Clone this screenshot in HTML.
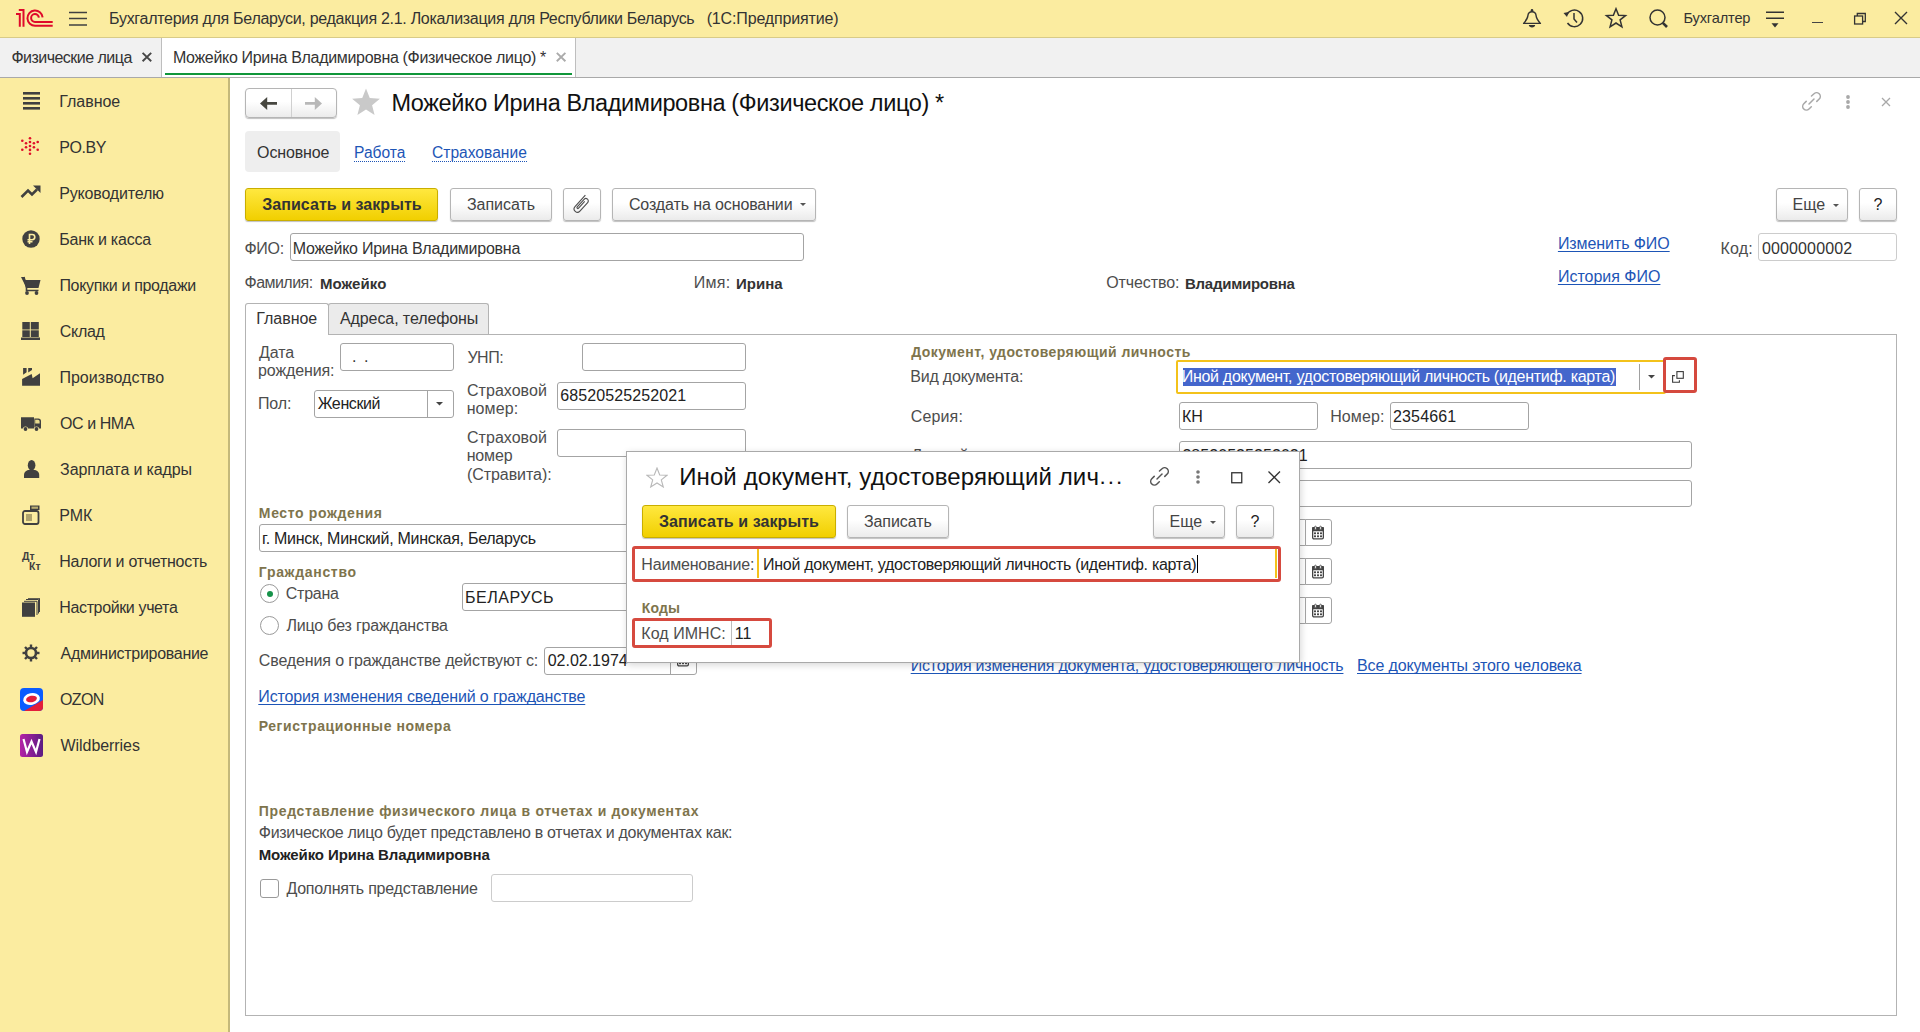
<!DOCTYPE html>
<html><head><meta charset="utf-8">
<style>
*{box-sizing:border-box;margin:0;padding:0}
html,body{width:1920px;height:1032px;overflow:hidden;background:#fff;font-family:"Liberation Sans",sans-serif;color:#333}
div,span,svg{position:absolute;white-space:nowrap}
.t{line-height:1}
.btn{border:1px solid #B5B5B5;border-radius:3px;background:linear-gradient(#fff 45%,#EBEBEB);box-shadow:0 1px 1px rgba(0,0,0,.25)}
.ybtn{border:1px solid #C9AE00;border-radius:3px;background:linear-gradient(#FFE83F,#F1CF00);box-shadow:0 1px 1px rgba(0,0,0,.25)}
.inp{border:1px solid #A4A4A4;border-radius:3px;background:#fff}
.inpl{border:1px solid #CCCCCC;border-radius:3px;background:#fff}
</style></head><body>

<div style="left:0;top:0;width:1920px;height:38px;background:#FBECA0;border-bottom:1px solid #D8CB88"></div>
<svg style="left:10px;top:4px" width="50" height="28" viewBox="10 4 50 28"><g fill="none" stroke="#DF0A2B" stroke-width="2" stroke-linecap="butt">
<path d="M16 14.1 H19.8 V26.8"/>
<path d="M18.8 10.1 H23.5 V26.8"/>
<path d="M42.6 17.3 A7.6 7.6 0 1 0 35.2 25.7 H52.7"/>
<path d="M38.9 17.6 A3.9 3.9 0 1 0 35 21.9 H52.7"/>
</g></svg>
<svg style="left:68px;top:11px" width="20" height="16" viewBox="0 0 20 16"><g stroke="#404040" stroke-width="1.5"><path d="M1 1.5H19M1 7.5H19M1 13.9H19"/></g></svg>
<span class="t" style="left:109.10px;top:10.86px;font-size:16px;color:#333;letter-spacing:-0.290px">Бухгалтерия для Беларуси, редакция 2.1. Локализация для Республики Беларусь</span>
<span class="t" style="left:706.70px;top:10.86px;font-size:16px;color:#333;letter-spacing:-0.156px">(1С:Предприятие)</span>
<svg style="left:1515px;top:4px" width="32" height="28" viewBox="1515 4 32 28"><path d="M1523.6 23.4 C1526.2 20.4 1527.7 18.6 1527.9 15.6 C1528.2 12.6 1530 11.7 1532 11.7 C1534 11.7 1535.8 12.6 1536.1 15.6 C1536.3 18.6 1537.8 20.4 1540.4 23.4 Z" fill="none" stroke="#333" stroke-width="1.4" stroke-linejoin="round"/><circle cx="1532" cy="10.4" r="1.3" fill="#333"/><path d="M1528.8 25 H1535.2 C1535.2 28.2 1528.8 28.2 1528.8 25 Z" fill="#333"/></svg>
<svg style="left:1562px;top:7px" width="24" height="23" viewBox="0 0 24 23"><g fill="none" stroke="#333" stroke-width="1.5">
<path d="M4.8 8 A8.3 8.3 0 1 1 5.5 16"/><path d="M12 6 V12 L15 15.5"/></g><path d="M1.5 6 L6.5 5 L5 10 Z" fill="#333"/></svg>
<svg style="left:1604px;top:7px" width="24" height="22" viewBox="0 0 24 22"><path d="M12 1.8 L14.6 8.3 L21.5 8.6 L16.1 12.9 L17.9 19.8 L12 16 L6.1 19.8 L7.9 12.9 L2.5 8.6 L9.4 8.3 Z" fill="none" stroke="#333" stroke-width="1.5" stroke-linejoin="miter"/></svg>
<svg style="left:1647px;top:7px" width="24" height="23" viewBox="0 0 24 23"><g fill="none" stroke="#333"><circle cx="10.5" cy="10.5" r="7.5" stroke-width="1.5"/><path d="M15.8 15.8 L20 20" stroke-width="2.6"/></g></svg>
<span class="t" style="left:1683.40px;top:11.04px;font-size:14.6px;color:#333;letter-spacing:-0.143px">Бухгалтер</span>
<svg style="left:1764px;top:10px" width="22" height="20" viewBox="0 0 22 20"><g stroke="#333" stroke-width="1.5"><path d="M2 2.2H20M2 8.2H20"/></g><path d="M7.5 13.2 H14.5 L11 17.5 Z" fill="#333"/></svg>
<div style="left:1812px;top:22px;width:11px;height:1px;background:#444"></div>
<svg style="left:1852px;top:11px" width="16" height="15" viewBox="0 0 16 15"><g fill="none" stroke="#333" stroke-width="1.3"><rect x="2.6" y="5" width="8" height="8"/><path d="M5.3 5 V2.5 H13.3 V10.5 H10.6"/></g></svg>
<svg style="left:1893px;top:10px" width="16" height="16" viewBox="0 0 16 16"><path d="M2 2 L14 14 M14 2 L2 14" stroke="#333" stroke-width="1.4"/></svg>
<div style="left:0;top:38px;width:1920px;height:40px;background:#F1F1F1;border-bottom:1px solid #A9A9A9"></div>
<span class="t" style="left:11.40px;top:49.86px;font-size:16px;color:#333;letter-spacing:-0.523px">Физические лица</span>
<svg style="left:140px;top:50px" width="14" height="14" viewBox="140 50 14 14"><path d="M142.6 52.9 L151.2 61.3 M151.2 52.9 L142.6 61.3" stroke="#474747" stroke-width="1.9"/></svg>
<div style="left:161px;top:38px;width:415px;height:39px;background:#fff;border-left:1px solid #BEBEBE;border-right:1px solid #BEBEBE"></div>
<div style="left:165px;top:73px;width:407px;height:2px;background:#10963A"></div>
<span class="t" style="left:172.90px;top:49.86px;font-size:16px;color:#333;letter-spacing:-0.322px">Можейко Ирина Владимировна (Физическое лицо) *</span>
<svg style="left:554px;top:50px" width="14" height="14" viewBox="554 50 14 14"><path d="M556.8 52.9 L565.4 61.3 M565.4 52.9 L556.8 61.3" stroke="#ABABAB" stroke-width="1.9"/></svg>
<div style="left:0;top:78px;width:230px;height:954px;background:#FBECA0;border-right:2px solid #C4B97A"></div>
<span class="t" style="left:59.30px;top:93.86px;font-size:16px;color:#333;letter-spacing:-0.039px">Главное</span>
<span class="t" style="left:59.30px;top:139.86px;font-size:16px;color:#333;letter-spacing:-0.434px">PO.BY</span>
<span class="t" style="left:59.30px;top:185.86px;font-size:16px;color:#333;letter-spacing:-0.177px">Руководителю</span>
<span class="t" style="left:59.30px;top:231.86px;font-size:16px;color:#333;letter-spacing:-0.219px">Банк и касса</span>
<span class="t" style="left:59.40px;top:277.86px;font-size:16px;color:#333;letter-spacing:-0.322px">Покупки и продажи</span>
<span class="t" style="left:59.80px;top:323.86px;font-size:16px;color:#333;letter-spacing:-0.317px">Склад</span>
<span class="t" style="left:59.40px;top:369.86px;font-size:16px;color:#333;letter-spacing:0.034px">Производство</span>
<span class="t" style="left:59.90px;top:415.86px;font-size:16px;color:#333;letter-spacing:-0.402px">ОС и НМА</span>
<span class="t" style="left:60.10px;top:461.86px;font-size:16px;color:#333;letter-spacing:-0.124px">Зарплата и кадры</span>
<span class="t" style="left:59.30px;top:507.86px;font-size:16px;color:#333">РМК</span>
<span class="t" style="left:59.30px;top:553.86px;font-size:16px;color:#333;letter-spacing:-0.263px">Налоги и отчетность</span>
<span class="t" style="left:59.30px;top:599.86px;font-size:16px;color:#333;letter-spacing:-0.368px">Настройки учета</span>
<span class="t" style="left:60.60px;top:645.86px;font-size:16px;color:#333;letter-spacing:-0.292px">Администрирование</span>
<span class="t" style="left:59.90px;top:691.86px;font-size:16px;color:#333;letter-spacing:-0.588px">OZON</span>
<span class="t" style="left:60.60px;top:737.86px;font-size:16px;color:#333;letter-spacing:-0.072px">Wildberries</span>
<svg style="left:23px;top:92px" width="17" height="18" viewBox="0 0 17 18"><g fill="#404040"><rect x="0" y="0" width="17" height="2.6"/><rect x="0" y="5" width="17" height="2.6"/><rect x="0" y="10" width="17" height="2.6"/><rect x="0" y="15" width="17" height="2.6"/></g></svg>
<svg style="left:15px;top:132px" width="32" height="30" viewBox="15 132 32 30"><circle cx="30" cy="138.25" r="1.3" fill="#E0102A"/><circle cx="30" cy="142" r="1.3" fill="#E0102A"/><circle cx="30" cy="146" r="1.3" fill="#E0102A"/><circle cx="30" cy="149.9" r="1.3" fill="#E0102A"/><circle cx="30" cy="153.7" r="1.3" fill="#E0102A"/><circle cx="26.05" cy="143.3" r="1.3" fill="#E0102A"/><circle cx="26.05" cy="147.3" r="1.3" fill="#E0102A"/><circle cx="33.9" cy="143.3" r="1.3" fill="#E0102A"/><circle cx="33.9" cy="147.3" r="1.3" fill="#E0102A"/><circle cx="22.3" cy="140.7" r="1.3" fill="#E0102A"/><circle cx="22.3" cy="149.7" r="1.3" fill="#E0102A"/><circle cx="37.7" cy="142" r="1.3" fill="#E0102A"/><circle cx="37.7" cy="149.7" r="1.3" fill="#E0102A"/></svg>
<svg style="left:20px;top:185px" width="21" height="14" viewBox="0 0 21 14"><path d="M1.5 12 L8 5.5 L12 9.5 L17 4.5" fill="none" stroke="#404040" stroke-width="2.6"/><path d="M13 0.5 H20.5 V8 Z" fill="#404040"/></svg>
<svg style="left:22px;top:230px" width="18" height="18" viewBox="0 0 18 18"><circle cx="9" cy="9" r="8.7" fill="#404040"/><g fill="none" stroke="#FBECA0" stroke-width="1.6"><path d="M7.5 14 V4.5 H10.2 A2.6 2.6 0 0 1 10.2 9.7 H5.5 M5.5 11.8 H10.5"/></g></svg>
<svg style="left:21px;top:276px" width="20" height="19" viewBox="0 0 20 19"><path d="M0 1 H3 L4.5 4 H19.5 L17.5 12 H5.5 Z" fill="#404040"/><path d="M3 1 L5.5 12 V14.5 H17.5" fill="none" stroke="#404040" stroke-width="1.6"/><circle cx="6" cy="17" r="1.9" fill="#404040"/><circle cx="15.5" cy="17" r="1.9" fill="#404040"/></svg>
<svg style="left:21px;top:322px" width="19" height="18" viewBox="0 0 19 18"><g fill="#404040"><rect x="1.3" y="0" width="7.5" height="7.5"/><rect x="9.8" y="0" width="8" height="7.5"/><rect x="1.3" y="8.3" width="7.5" height="6.7"/><rect x="9.8" y="8.3" width="8" height="6.7"/><rect x="0" y="15.5" width="19" height="2.5"/></g></svg>
<svg style="left:15px;top:360px" width="32" height="80" viewBox="15 360 32 80"><path d="M22.1 379 L31.7 373.9 L32.6 378.2 L40 373.2 V385.8 H22.1 Z" fill="#404040"/><path d="M23.1 368.1 H26.6 V372.2 L23.1 374.8 Z M28.2 368.1 H32 V370 L28.2 372.6 Z" fill="#404040"/><path d="M21 417.2 H34 V428.5 H21 Z M34.3 418.6 H38.3 A2.7 2.7 0 0 1 41 421.3 V428.5 H34.3 Z" fill="#404040"/><path d="M35.2 419.7 H38 A1.6 1.6 0 0 1 39.6 421.3 V423.6 H35.2 Z" fill="#E9DC8E"/><circle cx="25.5" cy="429" r="2.6" fill="#FBECA0"/><circle cx="36.5" cy="429" r="2.6" fill="#FBECA0"/><circle cx="25.5" cy="429" r="1.9" fill="#404040"/><circle cx="36.5" cy="429" r="1.9" fill="#404040"/></svg>
<svg style="left:24px;top:460px" width="16" height="18" viewBox="0 0 16 18"><ellipse cx="7.6" cy="5.2" rx="3.8" ry="5.2" fill="#404040"/><path d="M0 18 V15 C0 11.5 3 10 5 10 H10 C12.5 10 15.2 11.5 15.2 15 V18 Z" fill="#404040"/></svg>
<svg style="left:22px;top:505px" width="18" height="20" viewBox="0 0 18 20"><rect x="1" y="6" width="15.5" height="13" rx="2" fill="none" stroke="#404040" stroke-width="1.8"/><rect x="8" y="0.5" width="9.5" height="4.5" fill="#404040"/><rect x="9.5" y="1.6" width="6.5" height="2.2" fill="#B9AD70"/><path d="M4 9 H10 V16 H4 Z" fill="#8E8558" opacity=".7"/></svg>
<span class="t" style="left:22px;top:551px;font-size:10.5px;font-weight:bold;color:#404040">Дт</span>
<span class="t" style="left:29px;top:561px;font-size:10.5px;font-weight:bold;color:#404040">Кт</span>
<svg style="left:22px;top:598px" width="18" height="19" viewBox="0 0 18 19"><rect x="0" y="4.5" width="13" height="14.3" fill="#404040"/><path d="M2 3.3 H15 V17 M4 1.5 H16.5 V15.5 M6 0.3 H17.5 V14" fill="none" stroke="#404040" stroke-width="1"/></svg>
<svg style="left:22px;top:644px" width="18" height="18" viewBox="0 0 18 18"><g fill="none" stroke="#404040"><circle cx="9" cy="9" r="5" stroke-width="2.6"/></g><path d="M14.50 9.00 L17.50 9.00" stroke="#404040" stroke-width="2.4"/><path d="M12.89 12.89 L15.01 15.01" stroke="#404040" stroke-width="2.4"/><path d="M9.00 14.50 L9.00 17.50" stroke="#404040" stroke-width="2.4"/><path d="M5.11 12.89 L2.99 15.01" stroke="#404040" stroke-width="2.4"/><path d="M3.50 9.00 L0.50 9.00" stroke="#404040" stroke-width="2.4"/><path d="M5.11 5.11 L2.99 2.99" stroke="#404040" stroke-width="2.4"/><path d="M9.00 3.50 L9.00 0.50" stroke="#404040" stroke-width="2.4"/><path d="M12.89 5.11 L15.01 2.99" stroke="#404040" stroke-width="2.4"/></svg>
<svg style="left:20px;top:688px" width="23" height="23" viewBox="0 0 23 23"><defs><clipPath id="oz"><rect x="0" y="0" width="23" height="23" rx="4"/></clipPath></defs><g clip-path="url(#oz)"><rect width="23" height="23" fill="#0A5CFF"/><path d="M4 23 L23 12 V23 Z" fill="#E31E3A"/><ellipse cx="11.5" cy="11" rx="8.5" ry="5.8" transform="rotate(-12 11.5 11)" fill="#fff"/><ellipse cx="11.5" cy="11" rx="5.5" ry="3.2" transform="rotate(-12 11.5 11)" fill="#E31E3A"/></g></svg>
<svg style="left:20px;top:734px" width="23" height="23" viewBox="0 0 23 23"><defs><linearGradient id="wb" x1="0" x2="1" y1="0" y2="0"><stop offset="0" stop-color="#B321A6"/><stop offset="1" stop-color="#5B1C82"/></linearGradient></defs><rect width="23" height="23" rx="2.5" fill="url(#wb)"/><path d="M3.5 5 L7 18 L11.5 7.5 L16 18 L19.5 5" fill="none" stroke="#fff" stroke-width="2.2" stroke-linejoin="miter"/></svg>
<div class="btn" style="left:245px;top:88px;width:92px;height:30px;border-radius:4px"></div>
<div style="left:291px;top:89px;width:1px;height:28px;background:#D0D0D0"></div>
<svg style="left:250px;top:90px" width="80" height="28" viewBox="250 90 80 28"><path d="M260 103.4 L267.2 97 V102.1 H277 V104.8 H267.2 V109.9 Z" fill="#474740"/><path d="M322 103.4 L314.8 97 V102.1 H305 V104.8 H314.8 V109.9 Z" fill="#B8B8B8"/></svg>
<svg style="left:346px;top:84px" width="40" height="40" viewBox="346 84 40 40"><path d="M366.00 88.60 L369.76 98.02 L379.89 98.69 L372.09 105.18 L374.58 115.01 L366.00 109.60 L357.42 115.01 L359.91 105.18 L352.11 98.69 L362.24 98.02 Z" fill="#C9C9C9"/></svg>
<span class="t" style="left:391.40px;top:91.51px;font-size:23.5px;color:#111;letter-spacing:-0.378px">Можейко Ирина Владимировна (Физическое лицо) *</span>
<svg style="left:1802px;top:92px" width="19" height="19" viewBox="0 0 19 19"><g fill="none" stroke="#A8A8A8" stroke-width="1.5" stroke-linecap="round"><path d="M9.5 4 L12 1.8 A3.6 3.6 0 0 1 17.2 7 L14.8 9.4"/><path d="M9.3 14.8 L7 17 A3.6 3.6 0 0 1 1.8 11.8 L4.2 9.4"/><path d="M7 12 L12 7"/></g></svg>
<svg style="left:1846px;top:95px" width="4" height="14" viewBox="0 0 4 14"><g fill="#A8A8A8"><circle cx="2" cy="2" r="1.9"/><circle cx="2" cy="7" r="1.9"/><circle cx="2" cy="12" r="1.9"/></g></svg>
<svg style="left:1881px;top:97px" width="10" height="10" viewBox="0 0 10 10"><path d="M1 1 L9 9 M9 1 L1 9" stroke="#A8A8A8" stroke-width="1.3"/></svg>
<div style="left:245px;top:131px;width:95px;height:41px;background:#EEEEEE;border-radius:4px"></div>
<span class="t" style="left:257.10px;top:144.86px;font-size:16px;color:#333;letter-spacing:-0.159px">Основное</span>
<span class="t" style="left:354px;top:144.8px;font-size:15.6px;color:#1D55B6;border-bottom:1px dotted #1D55B6;padding-bottom:1px">Работа</span>
<span class="t" style="left:432px;top:144.8px;font-size:15.6px;color:#1D55B6;border-bottom:1px dotted #1D55B6;padding-bottom:1px">Страхование</span>
<div class="ybtn" style="left:245px;top:188px;width:193px;height:33px;"></div>
<span class="t" style="left:262.20px;top:196.86px;font-size:16px;color:#333;font-weight:700;letter-spacing:0.051px">Записать и закрыть</span>
<div class="btn" style="left:450px;top:188px;width:102px;height:33px;"></div>
<span class="t" style="left:467.00px;top:196.86px;font-size:16px;color:#444;letter-spacing:-0.048px">Записать</span>
<div class="btn" style="left:563px;top:188px;width:38px;height:33px;"></div>
<svg style="left:563px;top:188px" width="38" height="33" viewBox="-19 -16.5 38 33"><path d="M-3.3 -10.2 V5.3 A3.3 3.3 0 0 0 3.3 5.3 V-6.3 A2.4 2.4 0 0 0 -1.5 -6.3 V4 A0.9 0.9 0 0 0 0.3 4 V-5.2" fill="none" stroke="#505050" stroke-width="1.15" transform="translate(-1 0.5) rotate(42)"/></svg>
<div class="btn" style="left:612px;top:188px;width:204px;height:33px;"></div>
<span class="t" style="left:628.90px;top:196.86px;font-size:16px;color:#444;letter-spacing:-0.119px">Создать на основании</span>
<svg style="left:800px;top:203px" width="6" height="3" viewBox="0 0 6 3"><path d="M0 0 H6 L3 3 Z" fill="#555"/></svg>
<div class="btn" style="left:1776px;top:188px;width:72px;height:33px;"></div>
<span class="t" style="left:1792.60px;top:196.86px;font-size:16px;color:#444">Еще</span>
<svg style="left:1833px;top:204px" width="6" height="3" viewBox="0 0 6 3"><path d="M0 0 H6 L3 3 Z" fill="#555"/></svg>
<div class="btn" style="left:1859px;top:188px;width:38px;height:33px;"></div>
<span class="t" style="left:1873.40px;top:196.86px;font-size:16px;color:#222">?</span>
<span class="t" style="left:244.40px;top:240.86px;font-size:16px;color:#4D4D4D;letter-spacing:-0.236px">ФИО:</span>
<div class="inp" style="left:290px;top:233px;width:514px;height:28px;"></div>
<span class="t" style="left:292.70px;top:240.86px;font-size:16px;color:#333;letter-spacing:-0.254px">Можейко Ирина Владимировна</span>
<span class="t" style="left:1557.90px;top:235.86px;font-size:16px;color:#1D55B6;letter-spacing:-0.080px;text-decoration:underline;text-underline-offset:2px;text-decoration-skip-ink:none">Изменить ФИО</span>
<span class="t" style="left:1557.90px;top:268.86px;font-size:16px;color:#1D55B6;letter-spacing:-0.006px;text-decoration:underline;text-underline-offset:2px;text-decoration-skip-ink:none">История ФИО</span>
<span class="t" style="left:1720.40px;top:240.86px;font-size:16px;color:#4D4D4D;letter-spacing:0.199px">Код:</span>
<div class="inpl" style="left:1758px;top:233px;width:139px;height:28px;"></div>
<span class="t" style="left:1762.00px;top:240.86px;font-size:16px;color:#333;letter-spacing:0.124px">0000000002</span>
<span class="t" style="left:244.50px;top:274.86px;font-size:16px;color:#4D4D4D;letter-spacing:-0.534px">Фамилия:</span>
<span class="t" style="left:320.00px;top:275.70px;font-size:15px;color:#333;font-weight:700;letter-spacing:0.072px">Можейко</span>
<span class="t" style="left:693.70px;top:274.86px;font-size:16px;color:#4D4D4D;letter-spacing:0.295px">Имя:</span>
<span class="t" style="left:736.00px;top:275.70px;font-size:15px;color:#333;font-weight:700;letter-spacing:0.019px">Ирина</span>
<span class="t" style="left:1106.20px;top:274.86px;font-size:16px;color:#4D4D4D;letter-spacing:-0.082px">Отчество:</span>
<span class="t" style="left:1185.00px;top:275.70px;font-size:15px;color:#333;font-weight:700;letter-spacing:-0.261px">Владимировна</span>
<div style="left:245px;top:334px;width:1652px;height:682px;border:1px solid #B3B3B3;border-top:1px solid #B3B3B3;background:#fff"></div>
<div style="left:245px;top:303px;width:84px;height:32px;background:#fff;border:1px solid #B3B3B3;border-bottom:none;border-radius:3px 3px 0 0"></div>
<div style="left:328px;top:303px;width:161px;height:31px;background:#EBEBEB;border:1px solid #B3B3B3;border-bottom:none;border-radius:3px 3px 0 0"></div>
<span class="t" style="left:256.30px;top:310.86px;font-size:16px;color:#333;letter-spacing:-0.039px">Главное</span>
<span class="t" style="left:340.00px;top:310.86px;font-size:16px;color:#333;letter-spacing:-0.096px">Адреса, телефоны</span>
<span class="t" style="left:259.00px;top:344.86px;font-size:16px;color:#4D4D4D;letter-spacing:-0.077px">Дата</span>
<span class="t" style="left:258.10px;top:362.86px;font-size:16px;color:#4D4D4D;letter-spacing:-0.124px">рождения:</span>
<div class="inp" style="left:340px;top:343px;width:114px;height:28px;"></div>
<span class="t" style="left:351.90px;top:348.86px;font-size:16px;color:#333">.</span>
<span class="t" style="left:363.90px;top:348.86px;font-size:16px;color:#333">.</span>
<span class="t" style="left:467.40px;top:349.86px;font-size:16px;color:#4D4D4D;letter-spacing:-0.473px">УНП:</span>
<div class="inp" style="left:582px;top:343px;width:164px;height:28px;"></div>
<span class="t" style="left:257.90px;top:395.86px;font-size:16px;color:#4D4D4D;letter-spacing:-0.061px">Пол:</span>
<div class="inp" style="left:314px;top:390px;width:140px;height:28px;"></div>
<div style="left:427px;top:391px;width:1px;height:26px;background:#A4A4A4"></div>
<svg style="left:436px;top:402px" width="7" height="4" viewBox="0 0 7 4"><path d="M0 0 H7 L3.5 3.5 Z" fill="#444"/></svg>
<span class="t" style="left:317.70px;top:395.86px;font-size:16px;color:#222;letter-spacing:-0.392px">Женский</span>
<span class="t" style="left:467.00px;top:382.86px;font-size:16px;color:#4D4D4D;letter-spacing:0.035px">Страховой</span>
<span class="t" style="left:466.70px;top:400.86px;font-size:16px;color:#4D4D4D;letter-spacing:0.094px">номер:</span>
<div class="inp" style="left:557px;top:382px;width:189px;height:28px;"></div>
<span class="t" style="left:560.20px;top:387.86px;font-size:16px;color:#222;letter-spacing:0.102px">68520525252021</span>
<span class="t" style="left:467.00px;top:429.86px;font-size:16px;color:#4D4D4D;letter-spacing:0.035px">Страховой</span>
<span class="t" style="left:466.70px;top:447.86px;font-size:16px;color:#4D4D4D;letter-spacing:-0.158px">номер</span>
<span class="t" style="left:466.90px;top:466.86px;font-size:16px;color:#4D4D4D;letter-spacing:-0.052px">(Стравита):</span>
<div class="inp" style="left:557px;top:429px;width:189px;height:28px;"></div>
<span class="t" style="left:258.85px;top:505.55px;font-size:14px;color:#7E744C;font-weight:700;letter-spacing:0.631px">Место рождения</span>
<div class="inp" style="left:259px;top:524px;width:441px;height:28px;"></div>
<span class="t" style="left:262.10px;top:530.86px;font-size:16px;color:#222;letter-spacing:-0.274px">г. Минск, Минский, Минская, Беларусь</span>
<span class="t" style="left:258.85px;top:564.55px;font-size:14px;color:#7E744C;font-weight:700;letter-spacing:0.679px">Гражданство</span>
<div style="left:260px;top:584px;width:19px;height:19px;border:1px solid #9A9A9A;border-radius:50%;background:#fff"></div>
<div style="left:266.5px;top:590.5px;width:6px;height:6px;border-radius:50%;background:#16924A"></div>
<span class="t" style="left:285.80px;top:585.86px;font-size:16px;color:#4D4D4D;letter-spacing:-0.243px">Страна</span>
<div class="inp" style="left:462px;top:583px;width:238px;height:28px;"></div>
<span class="t" style="left:465.00px;top:589.86px;font-size:16px;color:#222;letter-spacing:0.517px">БЕЛАРУСЬ</span>
<div style="left:260px;top:616px;width:19px;height:19px;border:1px solid #9A9A9A;border-radius:50%;background:#fff"></div>
<span class="t" style="left:286.50px;top:617.86px;font-size:16px;color:#4D4D4D;letter-spacing:-0.186px">Лицо без гражданства</span>
<span class="t" style="left:258.80px;top:652.86px;font-size:16px;color:#4D4D4D;letter-spacing:-0.128px">Сведения о гражданстве действуют с:</span>
<div class="inp" style="left:544px;top:647px;width:153px;height:28px;"></div>
<div style="left:670px;top:648px;width:1px;height:26px;background:#A4A4A4"></div>
<svg style="left:676px;top:652px" width="14" height="15" viewBox="0 0 14 15"><rect x="1.65" y="2.65" width="10.7" height="11.2" rx="1.3" fill="#fff" stroke="#444" stroke-width="1.3"/><rect x="1" y="2" width="12" height="4.3" rx="1" fill="#444"/><g fill="#333"><rect x="3.1" y="7.4" width="1.8" height="1.8"/><rect x="6.1" y="7.4" width="1.8" height="1.8"/><rect x="9.1" y="7.4" width="1.8" height="1.8"/><rect x="3.1" y="10.4" width="1.8" height="1.8"/><rect x="6.1" y="10.4" width="1.8" height="1.8"/><rect x="9.1" y="10.4" width="1.8" height="1.8"/></g></svg>
<span class="t" style="left:547.70px;top:652.86px;font-size:16px;color:#222;letter-spacing:-0.009px">02.02.1974</span>
<span class="t" style="left:258.30px;top:688.86px;font-size:16px;color:#1D55B6;letter-spacing:-0.147px;text-decoration:underline;text-underline-offset:2px;text-decoration-skip-ink:none">История изменения сведений о гражданстве</span>
<span class="t" style="left:258.70px;top:718.55px;font-size:14px;color:#7E744C;font-weight:700;letter-spacing:0.580px">Регистрационные номера</span>
<span class="t" style="left:258.80px;top:803.55px;font-size:14px;color:#7E744C;font-weight:700;letter-spacing:0.653px">Представление физического лица в отчетах и документах</span>
<span class="t" style="left:258.80px;top:824.86px;font-size:16px;color:#4D4D4D;letter-spacing:-0.299px">Физическое лицо будет представлено в отчетах и документах как:</span>
<span class="t" style="left:258.70px;top:846.70px;font-size:15px;color:#222;font-weight:700;letter-spacing:-0.100px">Можейко Ирина Владимировна</span>
<div style="left:260px;top:879px;width:19px;height:19px;border:1px solid #9A9A9A;border-radius:3px;background:#fff"></div>
<span class="t" style="left:286.40px;top:880.86px;font-size:16px;color:#4D4D4D;letter-spacing:-0.232px">Дополнять представление</span>
<div class="inpl" style="left:491px;top:874px;width:202px;height:28px;"></div>
<span class="t" style="left:911.15px;top:344.55px;font-size:14px;color:#7E744C;font-weight:700;letter-spacing:0.458px">Документ, удостоверяющий личность</span>
<span class="t" style="left:910.30px;top:368.86px;font-size:16px;color:#4D4D4D;letter-spacing:-0.216px">Вид документа:</span>
<div style="left:1176px;top:360px;width:490px;height:34px;border:2px solid #F3C21B;border-radius:2px;background:#fff"></div>
<div style="left:1182.5px;top:368px;width:433.5px;height:18px;background:#4466CC"></div>
<span class="t" style="left:1181.70px;top:368.86px;font-size:16px;color:#fff;letter-spacing:-0.286px">Иной документ, удостоверяющий личность (идентиф. карта)</span>
<div style="left:1639px;top:364px;width:1px;height:26px;background:#A0A0A0"></div>
<svg style="left:1648px;top:375px" width="7" height="4" viewBox="0 0 7 4"><path d="M0 0 H7 L3.5 3.5 Z" fill="#444"/></svg>
<div style="left:1663.3px;top:357px;width:33.7px;height:36px;border:3.7px solid #D5493E;border-radius:3px;background:#fff"></div>
<svg style="left:1668px;top:366px" width="20" height="20" viewBox="1668 366 20 20"><g fill="none" stroke="#3A3A3A" stroke-width="1.1"><rect x="1676.9" y="371.6" width="6.4" height="6.7"/><path d="M1674.9 375.6 H1672.6 V382.3 H1679.4 V380.2"/></g></svg>
<span class="t" style="left:910.80px;top:408.86px;font-size:16px;color:#4D4D4D;letter-spacing:0.129px">Серия:</span>
<div class="inp" style="left:1179px;top:402px;width:139px;height:28px;"></div>
<span class="t" style="left:1181.90px;top:408.86px;font-size:16px;color:#222">КН</span>
<span class="t" style="left:1330.20px;top:408.86px;font-size:16px;color:#4D4D4D;letter-spacing:0.110px">Номер:</span>
<div class="inp" style="left:1390px;top:402px;width:139px;height:28px;"></div>
<span class="t" style="left:1393.00px;top:408.86px;font-size:16px;color:#222;letter-spacing:0.152px">2354661</span>
<span class="t" style="left:911.50px;top:447.86px;font-size:16px;color:#4D4D4D">Личный номер:</span>
<div class="inp" style="left:1179px;top:441px;width:513px;height:28px;"></div>
<span class="t" style="left:1182.40px;top:447.86px;font-size:16px;color:#222;letter-spacing:0.055px">38520525252021</span>
<div class="inp" style="left:1179px;top:480px;width:513px;height:27px;"></div>
<div class="inp" style="left:1180px;top:519px;width:126px;height:27px;border-radius:3px 0 0 3px"></div>
<div class="inp" style="left:1305px;top:519px;width:27px;height:27px;border-radius:0 3px 3px 0"></div>
<svg style="left:1311px;top:525px" width="14" height="15" viewBox="0 0 14 15"><rect x="1.65" y="2.65" width="10.7" height="11.2" rx="1.3" fill="#fff" stroke="#444" stroke-width="1.3"/><rect x="1" y="2" width="12" height="4.3" rx="1" fill="#444"/><rect x="3.6" y="1.2" width="1.7" height="3.6" rx="0.85" fill="#fff" stroke="#444" stroke-width="0.8"/><rect x="8.7" y="1.2" width="1.7" height="3.6" rx="0.85" fill="#fff" stroke="#444" stroke-width="0.8"/><g fill="#333"><rect x="3.1" y="7.4" width="1.8" height="1.8"/><rect x="6.1" y="7.4" width="1.8" height="1.8"/><rect x="9.1" y="7.4" width="1.8" height="1.8"/><rect x="3.1" y="10.4" width="1.8" height="1.8"/><rect x="6.1" y="10.4" width="1.8" height="1.8"/><rect x="9.1" y="10.4" width="1.8" height="1.8"/></g></svg>
<div class="inp" style="left:1180px;top:558px;width:126px;height:27px;border-radius:3px 0 0 3px"></div>
<div class="inp" style="left:1305px;top:558px;width:27px;height:27px;border-radius:0 3px 3px 0"></div>
<svg style="left:1311px;top:564px" width="14" height="15" viewBox="0 0 14 15"><rect x="1.65" y="2.65" width="10.7" height="11.2" rx="1.3" fill="#fff" stroke="#444" stroke-width="1.3"/><rect x="1" y="2" width="12" height="4.3" rx="1" fill="#444"/><rect x="3.6" y="1.2" width="1.7" height="3.6" rx="0.85" fill="#fff" stroke="#444" stroke-width="0.8"/><rect x="8.7" y="1.2" width="1.7" height="3.6" rx="0.85" fill="#fff" stroke="#444" stroke-width="0.8"/><g fill="#333"><rect x="3.1" y="7.4" width="1.8" height="1.8"/><rect x="6.1" y="7.4" width="1.8" height="1.8"/><rect x="9.1" y="7.4" width="1.8" height="1.8"/><rect x="3.1" y="10.4" width="1.8" height="1.8"/><rect x="6.1" y="10.4" width="1.8" height="1.8"/><rect x="9.1" y="10.4" width="1.8" height="1.8"/></g></svg>
<div class="inp" style="left:1180px;top:597px;width:126px;height:27px;border-radius:3px 0 0 3px"></div>
<div class="inp" style="left:1305px;top:597px;width:27px;height:27px;border-radius:0 3px 3px 0"></div>
<svg style="left:1311px;top:603px" width="14" height="15" viewBox="0 0 14 15"><rect x="1.65" y="2.65" width="10.7" height="11.2" rx="1.3" fill="#fff" stroke="#444" stroke-width="1.3"/><rect x="1" y="2" width="12" height="4.3" rx="1" fill="#444"/><rect x="3.6" y="1.2" width="1.7" height="3.6" rx="0.85" fill="#fff" stroke="#444" stroke-width="0.8"/><rect x="8.7" y="1.2" width="1.7" height="3.6" rx="0.85" fill="#fff" stroke="#444" stroke-width="0.8"/><g fill="#333"><rect x="3.1" y="7.4" width="1.8" height="1.8"/><rect x="6.1" y="7.4" width="1.8" height="1.8"/><rect x="9.1" y="7.4" width="1.8" height="1.8"/><rect x="3.1" y="10.4" width="1.8" height="1.8"/><rect x="6.1" y="10.4" width="1.8" height="1.8"/><rect x="9.1" y="10.4" width="1.8" height="1.8"/></g></svg>
<span class="t" style="left:910.70px;top:657.86px;font-size:16px;color:#1D55B6;letter-spacing:-0.198px;text-decoration:underline;text-underline-offset:2px;text-decoration-skip-ink:none">История изменения документа, удостоверяющего личность</span>
<span class="t" style="left:1357.00px;top:657.86px;font-size:16px;color:#1D55B6;letter-spacing:-0.142px;text-decoration:underline;text-underline-offset:2px;text-decoration-skip-ink:none">Все документы этого человека</span>
<div style="left:626px;top:451px;width:674px;height:212px;background:#fff;border:1px solid #A9A9A9;box-shadow:1px 2px 7px rgba(0,0,0,.16)"></div>
<svg style="left:645.5px;top:467px" width="22" height="21" viewBox="0 0 22 21"><path d="M11 1 L13.7 8 L21 8.3 L15.3 12.9 L17.3 20 L11 16 L4.7 20 L6.7 12.9 L1 8.3 L8.3 8 Z" fill="none" stroke="#B8B8B8" stroke-width="1.1"/></svg>
<span class="t" style="left:679.20px;top:465.08px;font-size:24px;color:#111;letter-spacing:0.109px">Иной документ, удостоверяющий лич</span>
<span class="t" style="left:1099.60px;top:466.35px;font-size:22.5px;color:#111;letter-spacing:1.900px">...</span>
<svg style="left:1150px;top:467px" width="19" height="19" viewBox="0 0 19 19"><g fill="none" stroke="#555" stroke-width="1.5" stroke-linecap="round"><path d="M9.5 4 L12 1.8 A3.6 3.6 0 0 1 17.2 7 L14.8 9.4"/><path d="M9.3 14.8 L7 17 A3.6 3.6 0 0 1 1.8 11.8 L4.2 9.4"/><path d="M7 12 L12 7"/></g></svg>
<svg style="left:1196px;top:470px" width="4" height="14" viewBox="0 0 4 14"><g fill="#777"><circle cx="2" cy="2" r="1.8"/><circle cx="2" cy="7" r="1.8"/><circle cx="2" cy="12" r="1.8"/></g></svg>
<svg style="left:1231px;top:472px" width="12" height="12" viewBox="0 0 12 12"><rect x="0.75" y="0.75" width="10" height="10" fill="none" stroke="#333" stroke-width="1.3"/></svg>
<svg style="left:1267.5px;top:471px" width="13" height="13" viewBox="0 0 13 13"><path d="M0.5 0.5 L12 12 M12 0.5 L0.5 12" stroke="#333" stroke-width="1.3"/></svg>
<div class="ybtn" style="left:642px;top:505px;width:194px;height:33px;"></div>
<span class="t" style="left:659.00px;top:513.86px;font-size:16px;color:#333;font-weight:700;letter-spacing:0.080px">Записать и закрыть</span>
<div class="btn" style="left:847px;top:505px;width:102px;height:33px;"></div>
<span class="t" style="left:863.90px;top:513.86px;font-size:16px;color:#444;letter-spacing:-0.077px">Записать</span>
<div class="btn" style="left:1153px;top:505px;width:72px;height:33px;"></div>
<span class="t" style="left:1169.60px;top:513.86px;font-size:16px;color:#444">Еще</span>
<svg style="left:1210px;top:521px" width="6" height="3" viewBox="0 0 6 3"><path d="M0 0 H6 L3 3 Z" fill="#555"/></svg>
<div class="btn" style="left:1236px;top:505px;width:38px;height:33px;"></div>
<span class="t" style="left:1250.40px;top:513.86px;font-size:16px;color:#222">?</span>
<div style="left:632px;top:545.5px;width:649px;height:36px;border:3.5px solid #D64A3F;border-radius:3px;background:#fff"></div>
<span class="t" style="left:641.30px;top:556.86px;font-size:16px;color:#4D4D4D;letter-spacing:-0.185px">Наименование:</span>
<div style="left:757px;top:549px;width:2px;height:29px;background:#F3C21B"></div>
<div style="left:1275px;top:549px;width:2px;height:29px;background:#F3C21B"></div>
<span class="t" style="left:763.10px;top:556.86px;font-size:16px;color:#222;letter-spacing:-0.289px">Иной документ, удостоверяющий личность (идентиф. карта)</span>
<div style="left:1196.5px;top:555px;width:1px;height:18px;background:#000"></div>
<span class="t" style="left:641.80px;top:600.55px;font-size:14px;color:#7E744C;font-weight:700;letter-spacing:0.134px">Коды</span>
<div style="left:632px;top:618px;width:140px;height:30px;border:3.5px solid #D64A3F;border-radius:3px;background:#fff"></div>
<span class="t" style="left:641.30px;top:625.86px;font-size:16px;color:#4D4D4D;letter-spacing:0.052px">Код ИМНС:</span>
<div style="left:731px;top:621px;width:1px;height:24px;background:#BDBDBD"></div>
<span class="t" style="left:734.80px;top:625.86px;font-size:16px;color:#222">11</span>
</body></html>
